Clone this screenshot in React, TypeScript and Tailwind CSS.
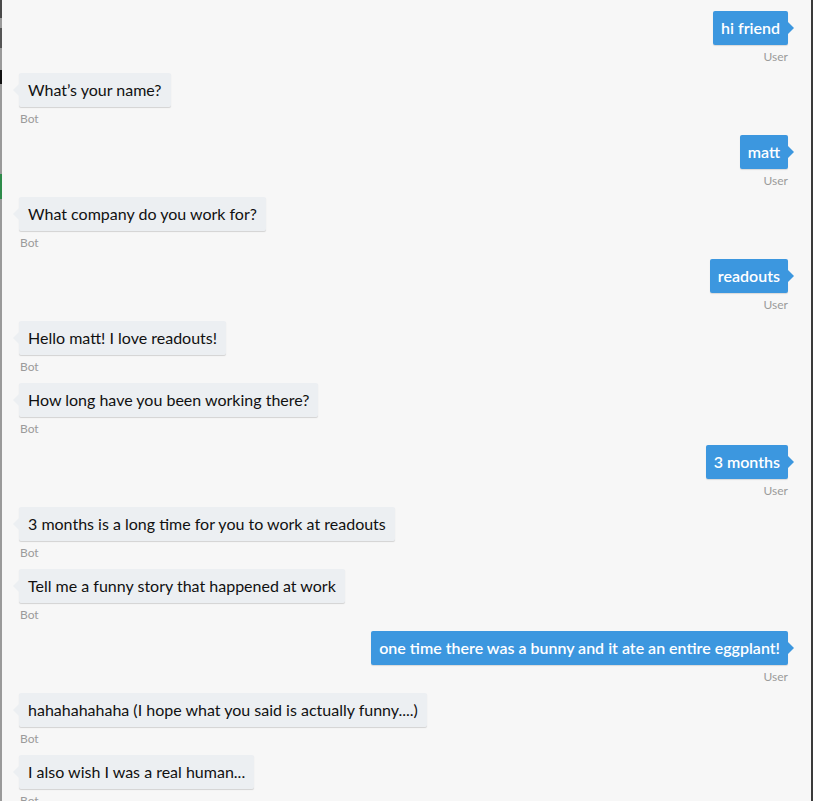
type Message = { from: "user" | "bot"; text: string };

const messages: Message[] = [
  { from: "user", text: "hi friend" },
  { from: "bot", text: "What\u2019s your name?" },
  { from: "user", text: "matt" },
  { from: "bot", text: "What company do you work for?" },
  { from: "user", text: "readouts" },
  { from: "bot", text: "Hello matt! I love readouts!" },
  { from: "bot", text: "How long have you been working there?" },
  { from: "user", text: "3 months" },
  { from: "bot", text: "3 months is a long time for you to work at readouts" },
  { from: "bot", text: "Tell me a funny story that happened at work" },
  { from: "user", text: "one time there was a bunny and it ate an entire eggplant!" },
  { from: "bot", text: "hahahahahaha (I hope what you said is actually funny....)" },
  { from: "bot", text: "I also wish I was a real human..." },
  { from: "bot", text: "" },
];

const Bubble = ({ msg }: { msg: Message }) => {
  const isUser = msg.from === "user";
  if (isUser) {
    return (
      <div className="flex flex-col items-end">
        <div className="relative h-[34px] px-[8px] flex items-center rounded-[2px] bg-[#3c97df] text-white text-[16px] font-semibold shadow-[0_1px_1px_rgba(0,0,0,0.12)]">
          {msg.text}
          <span className="absolute right-[-6px] top-[11px] w-0 h-0 border-y-[6px] border-y-transparent border-l-[6px] border-l-[#3c97df]" />
        </div>
        <div className="mt-[6px] h-[12px] leading-[12px] text-[12px] text-[#9b9b9b]">User</div>
      </div>
    );
  }
  return (
    <div className="flex flex-col items-start">
      {msg.text ? (
        <div className="relative h-[34px] px-[9px] flex items-center rounded-[2px] bg-[#eceff2] text-[#111] text-[16px] shadow-[0_1px_1px_rgba(0,0,0,0.15)]">
          {msg.text}
          <span className="absolute left-[-6px] top-[11px] w-0 h-0 border-y-[6px] border-y-transparent border-r-[6px] border-r-[#eceff2]" />
        </div>
      ) : null}
      <div className="mt-[6px] pl-[1px] h-[12px] leading-[12px] text-[12px] text-[#9b9b9b]">Bot</div>
    </div>
  );
};

export default function App() {
  return (
    <div className="flex h-[801px] w-[813px] overflow-hidden bg-[#f7f7f7] font-['Lato','Liberation_Sans',sans-serif]">
      {/* left window edge */}
      <div className="w-[2px] shrink-0 bg-[#9a9a9a] flex flex-col">
        <div className="h-[18px] bg-[#4a4a4a]" />
        <div className="h-[10px]" />
        <div className="h-[20px] bg-[#555]" />
        <div className="h-[22px]" />
        <div className="h-[14px] bg-[#111]" />
        <div className="h-[90px]" />
        <div className="h-[25px] bg-[#2e8b4a]" />
      </div>

      <div className="flex-1 flex flex-col gap-[10px] pt-[11px] pl-[17px] pr-[23px]">
        {messages.map((m, i) => (
          <Bubble key={i} msg={m} />
        ))}
      </div>

      {/* right window edge */}
      <div className="w-[2px] shrink-0 bg-[#3a3a3a]" />
    </div>
  );
}
